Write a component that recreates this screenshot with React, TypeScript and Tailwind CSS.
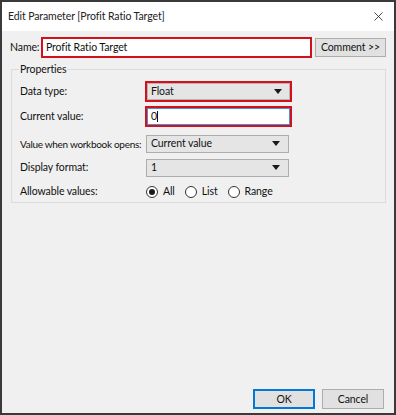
import { X } from 'lucide-react'

const font = { fontFamily: 'Lato, "Liberation Sans", Arial, sans-serif' }

function Arrow() {
  return (
    <svg width="8" height="5" viewBox="0 0 8 5" className="shrink-0">
      <path d="M0 0 L8 0 L4 5 Z" fill="#1a1a1a" />
    </svg>
  )
}

function Select({ value }: { value: string }) {
  return (
    <div className="flex items-center justify-between w-[143px] h-[18px] bg-[#e5e5e5] border border-[#adadad] pl-[4px] pr-[8px]">
      <span>{value}</span>
      <Arrow />
    </div>
  )
}

function Radio({ label, checked }: { label: string; checked?: boolean }) {
  return (
    <div className="flex items-center gap-[5px]">
      <span className="w-[12px] h-[12px] rounded-full border border-[#333] bg-white flex items-center justify-center">
        {checked && <span className="w-[6px] h-[6px] rounded-full bg-[#1a1a1a]" />}
      </span>
      <span>{label}</span>
    </div>
  )
}

export default function App() {
  return (
    <div
      className="w-[396px] h-[415px] flex flex-col border-2 border-[#3a3a3a] text-[10.5px] text-[#111] leading-none whitespace-nowrap tracking-[-0.1px]"
      style={font}
    >
      {/* title bar */}
      <div className="h-[29px] bg-white flex items-center justify-between pl-[6px] pr-[8px] text-[10.5px] text-[#222]">
        <span>Edit Parameter [Profit Ratio Target]</span>
        <X size={15} strokeWidth={1.3} color="#222" />
      </div>

      <div className="flex-1 bg-[#f0f0f0] flex flex-col">
        {/* name row */}
        <div className="flex items-center mt-[6px] pl-[8px]">
          <span className="w-[31px]">Name:</span>
          <div className="w-[271px] h-[21px] border-2 border-[#d4111b] bg-white flex items-center pl-[3px]">
            Profit Ratio Target
          </div>
          <button className="ml-[3px] w-[71px] h-[19px] bg-[#e1e1e1] border border-[#adadad] flex items-center justify-center">
            Comment &gt;&gt;
          </button>
        </div>

        {/* properties group */}
        <fieldset className="mt-[6px] ml-[9px] w-[375px] h-[139px] border border-[#dcdcdc] pl-[8px] pt-[6px]">
          <legend className="px-[1px] ml-[-1px]">Properties</legend>
          <div className="grid grid-cols-[125px_auto] items-center">
            <span>Data type:</span>
            <div className="w-[147px] h-[21px] border-2 border-[#d4111b] flex">
              <div className="flex-1 flex items-center justify-between bg-[#e5e5e5] border border-[#b5b5b5] pl-[3px] pr-[7px]">
                <span>Float</span>
                <Arrow />
              </div>
            </div>

            <span className="mt-[4px]">Current value:</span>
            <div className="mt-[4px] w-[147px] h-[21px] border-2 border-[#d4111b] flex">
              <div className="flex-1 flex items-center bg-white border border-[#4a90d9] pl-[3px]">
                <span>0</span>
                <span className="w-px h-[11px] bg-[#111]" />
              </div>
            </div>

            <span className="mt-[8px] text-[10px] tracking-[-0.3px]">Value when workbook opens:</span>
            <div className="mt-[8px] pl-[1px]">
              <Select value="Current value" />
            </div>

            <span className="mt-[6px]">Display format:</span>
            <div className="mt-[6px] pl-[1px]">
              <Select value="1" />
            </div>

            <span className="mt-[9px]">Allowable values:</span>
            <div className="mt-[9px] flex items-center gap-[10px] pl-[1px]">
              <Radio label="All" checked />
              <Radio label="List" />
              <Radio label="Range" />
            </div>
          </div>
        </fieldset>

        <div className="flex-1" />

        {/* buttons */}
        <div className="flex justify-end gap-[7px] pr-[10px] pb-[4px]">
          <button className="w-[62px] h-[20px] bg-[#e1e1e1] border-2 border-[#0078d7] flex items-center justify-center">
            OK
          </button>
          <button className="w-[62px] h-[20px] bg-[#e1e1e1] border border-[#adadad] flex items-center justify-center">
            Cancel
          </button>
        </div>
      </div>
    </div>
  )
}
